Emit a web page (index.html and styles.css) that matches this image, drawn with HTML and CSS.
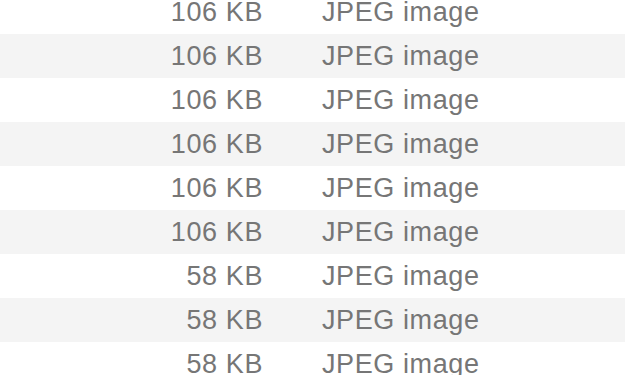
FILE: index.html
```html
<!DOCTYPE html>
<html>
<head>
<meta charset="utf-8">
<link rel="stylesheet" href="styles.css">
</head>
<body>
<div class="list">
  <div class="row"><span class="size">106 KB</span><span class="kind">JPEG image</span></div>
  <div class="row alt"><span class="size">106 KB</span><span class="kind">JPEG image</span></div>
  <div class="row"><span class="size">106 KB</span><span class="kind">JPEG image</span></div>
  <div class="row alt"><span class="size">106 KB</span><span class="kind">JPEG image</span></div>
  <div class="row"><span class="size">106 KB</span><span class="kind">JPEG image</span></div>
  <div class="row alt"><span class="size">106 KB</span><span class="kind">JPEG image</span></div>
  <div class="row"><span class="size">58 KB</span><span class="kind">JPEG image</span></div>
  <div class="row alt"><span class="size">58 KB</span><span class="kind">JPEG image</span></div>
  <div class="row"><span class="size">58 KB</span><span class="kind">JPEG image</span></div>
</div>
</body>
</html>
```
FILE: styles.css
```css
html, body {
  margin: 0;
  padding: 0;
  background: #ffffff;
  overflow: hidden;
}
.list {
  margin-top: -10px;
  font-family: "Liberation Sans", Arial, sans-serif;
  font-size: 27px;
  letter-spacing: 0.6px;
  color: #767676;
}
.row {
  display: grid;
  grid-template-columns: 263px 1fr;
  column-gap: 59px;
  height: 44px;
  line-height: 44px;
  background: #ffffff;
}
.row.alt {
  background: #f4f4f4;
}
.size {
  text-align: right;
}
.kind {
  text-align: left;
}
```
